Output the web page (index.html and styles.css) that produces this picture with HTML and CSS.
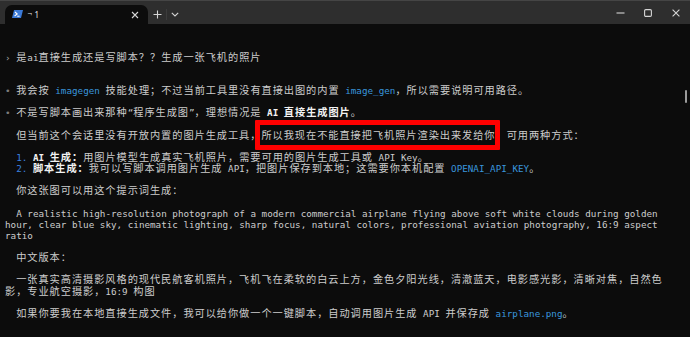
FILE: index.html
```html
<!DOCTYPE html>
<html lang="zh-CN">
<head>
<meta charset="utf-8">
<title>Terminal</title>
<link rel="stylesheet" href="styles.css">
</head>
<body>
<div class="window">
  <div class="titlebar">
    <div class="tab">
      <svg class="ps-icon" width="11" height="8" viewBox="0 0 11 8">
        <polygon points="2,0 11,0 9,8 0,8" fill="#3b7ad8"/>
        <polyline points="3,2 5.2,4 2.6,6" fill="none" stroke="#ffffff" stroke-width="1.1"/>
        <line x1="5.2" y1="6.2" x2="7.6" y2="6.2" stroke="#ffffff" stroke-width="1"/>
      </svg>
      <span class="tab-title"><span class="tab-sup">ᆨ</span>1</span>
      <svg class="tab-close" width="8" height="8" viewBox="0 0 8 8">
        <path d="M1 1 L7 7 M7 1 L1 7" stroke="#d6d6d6" stroke-width="1.1" fill="none"/>
      </svg>
    </div>
    <div class="tbtn">
      <svg width="9" height="9" viewBox="0 0 9 9"><path d="M4.5 0.5 V8.5 M0.5 4.5 H8.5" stroke="#d6d6d6" stroke-width="1.1" fill="none"/></svg>
    </div>
    <div class="tsep"></div>
    <div class="tbtn">
      <svg width="8" height="5" viewBox="0 0 8 5"><path d="M0.8 0.8 L4 4 L7.2 0.8" stroke="#d6d6d6" stroke-width="1.1" fill="none"/></svg>
    </div>
    <div class="spacer"></div>
    <div class="wbtn">
      <svg width="9" height="2" viewBox="0 0 9 2"><path d="M0.5 1 H8.5" stroke="#d6d6d6" stroke-width="1.1"/></svg>
    </div>
    <div class="wbtn">
      <svg width="8" height="8" viewBox="0 0 8 8"><rect x="0.6" y="0.6" width="6.8" height="6.8" rx="1.2" fill="none" stroke="#d6d6d6" stroke-width="1.1"/></svg>
    </div>
    <div class="wbtn">
      <svg width="8" height="8" viewBox="0 0 8 8"><path d="M0.6 0.6 L7.4 7.4 M7.4 0.6 L0.6 7.4" stroke="#d6d6d6" stroke-width="1.1" fill="none"/></svg>
    </div>
  </div>
  <div class="term">
    <div class="lines">
      <div class="ln"><span class="dim">›</span> <span class="c">是</span>ai<span class="c">直接生成还是写脚本？？生成一张飞机的照片</span></div>
      <div class="ln"></div>
      <div class="ln"></div>
      <div class="ln"><span class="bul">•</span> <span class="c">我会按</span> <span class="code">imagegen</span> <span class="c">技能处理；不过当前工具里没有直接出图的内置</span> <span class="code">image_gen</span><span class="c">，所以需要说明可用路径。</span></div>
      <div class="ln"></div>
      <div class="ln"><span class="bul">•</span> <span class="c">不是写脚本画出来那种</span>“<span class="c">程序生成图</span>”<span class="c">，理想情况是</span> <span class="b">AI <span class="c">直接生成图片</span></span><span class="c">。</span></div>
      <div class="ln"></div>
      <div class="ln">  <span class="c">但当前这个会话里没有开放内置的图片生成工具，</span><span class="mark"><span class="c">所以我现在不能直接把飞机照片渲染出来发给你</span></span><span class="c">，可用两种方式：</span></div>
      <div class="ln"></div>
      <div class="ln">  <span class="num">1.</span> <span class="b">AI <span class="c">生成：</span></span><span class="c">用图片模型生成真实飞机照片，需要可用的图片生成工具或</span> API Key<span class="c">。</span></div>
      <div class="ln">  <span class="num">2.</span> <span class="b"><span class="c">脚本生成：</span></span><span class="c">我可以写脚本调用图片生成</span> API<span class="c">，把图片保存到本地；这需要你本机配置</span> <span class="code">OPENAI_API_KEY</span><span class="c">。</span></div>
      <div class="ln"></div>
      <div class="ln">  <span class="c">你这张图可以用这个提示词生成：</span></div>
      <div class="ln"></div>
      <div class="ln">  A realistic high-resolution photograph of a modern commercial airplane flying above soft white clouds during golden</div>
      <div class="ln">hour, clear blue sky, cinematic lighting, sharp focus, natural colors, professional aviation photography, 16:9 aspect</div>
      <div class="ln">ratio</div>
      <div class="ln"></div>
      <div class="ln">  <span class="c">中文版本：</span></div>
      <div class="ln"></div>
      <div class="ln">  <span class="c">一张真实高清摄影风格的现代民航客机照片，飞机飞在柔软的白云上方，金色夕阳光线，清澈蓝天，电影感光影，清晰对焦，自然色</span></div>
      <div class="ln"><span class="c">影，专业航空摄影，</span>16:9 <span class="c">构图</span></div>
      <div class="ln"></div>
      <div class="ln">  <span class="c">如果你要我在本地直接生成文件，我可以给你做一个一键脚本，自动调用图片生成</span> API <span class="c">并保存成</span> <span class="code">airplane.png</span><span class="c">。</span></div>
    </div>
    <div class="scroll"><div class="thumb"></div></div>
  </div>
</div>
</body>
</html>
```

FILE: styles.css
```css
html, body {
  margin: 0;
  padding: 0;
}

body {
  background: #0c0c0c;
  width: 690px;
  height: 337px;
  overflow: hidden;
  font-family: "DejaVu Sans Mono", "Liberation Mono", monospace;
}

.window {
  width: 690px;
  height: 337px;
  display: flex;
  flex-direction: column;
}

/* ---------- title bar ---------- */
.titlebar {
  height: 24px;
  flex: 0 0 24px;
  box-sizing: border-box;
  border-top: 1px solid #454545;
  background: #2e2e2e;
  display: flex;
  align-items: flex-end;
}

.tab {
  margin-left: 5px;
  width: 143px;
  height: 19px;
  box-sizing: border-box;
  padding: 0 9px 0 7px;
  background: #0c0c0c;
  border-radius: 7px 7px 0 0;
  display: flex;
  align-items: center;
}

.ps-icon {
  display: block;
  margin-top: -1px;
}

.tab-title {
  margin-left: 4px;
  color: #e6e6e6;
  font-family: "Noto Sans", sans-serif;
  font-size: 8px;
  line-height: 10px;
  display: flex;
  align-items: flex-start;
  gap: 2px;
}

.tab-sup {
  font-family: "Noto Sans CJK KR", sans-serif;
  font-size: 6px;
  line-height: 6px;
  margin-top: -1px;
}

.tab-close {
  display: block;
  margin-left: auto;
}

.tbtn {
  width: 18px;
  height: 19px;
  display: flex;
  align-items: center;
  justify-content: center;
}

.tbtn:first-of-type {
  margin-left: 6px;
}

.tsep {
  width: 1px;
  height: 11px;
  margin-bottom: 4px;
  background: #3c3c3c;
  margin-left: -0.5px;
  margin-right: -0.5px;
}

.spacer {
  flex: 1;
}

.wbtn {
  width: 28px;
  align-self: stretch;
  display: flex;
  align-items: center;
  justify-content: center;
}

/* ---------- terminal ---------- */
.term {
  flex: 1;
  display: flex;
  min-height: 0;
}

.lines {
  flex: 1;
  padding: 27.6px 0 0 5px;
  font-size: 9.27px;
  line-height: 11.15px;
  color: #cccccc;
}

.ln {
  height: 11.15px;
  white-space: pre;
}

.c {
  font-family: "Noto Sans CJK SC", sans-serif;
  font-size: 10.2px;
  letter-spacing: 0.96px;
  line-height: 8px;
}

.dim {
  color: #a8a8a8;
}

.bul {
  color: #7c7c7c;
}

.code {
  color: #3a96dd;
}

.num {
  color: #3b82e0;
}

.b {
  color: #f2f2f2;
  font-weight: bold;
}

.mark {
  position: relative;
}

.mark::after {
  content: "";
  position: absolute;
  left: -6.5px;
  right: -4px;
  top: -9.8px;
  bottom: -9.4px;
  border: 5px solid #ff0000;
  border-radius: 1px;
}

.scroll {
  width: 5px;
  flex: 0 0 5px;
}

.thumb {
  margin-top: 66px;
  width: 2px;
  height: 13px;
  background: #9c9c9c;
  border-radius: 1px;
}
```
